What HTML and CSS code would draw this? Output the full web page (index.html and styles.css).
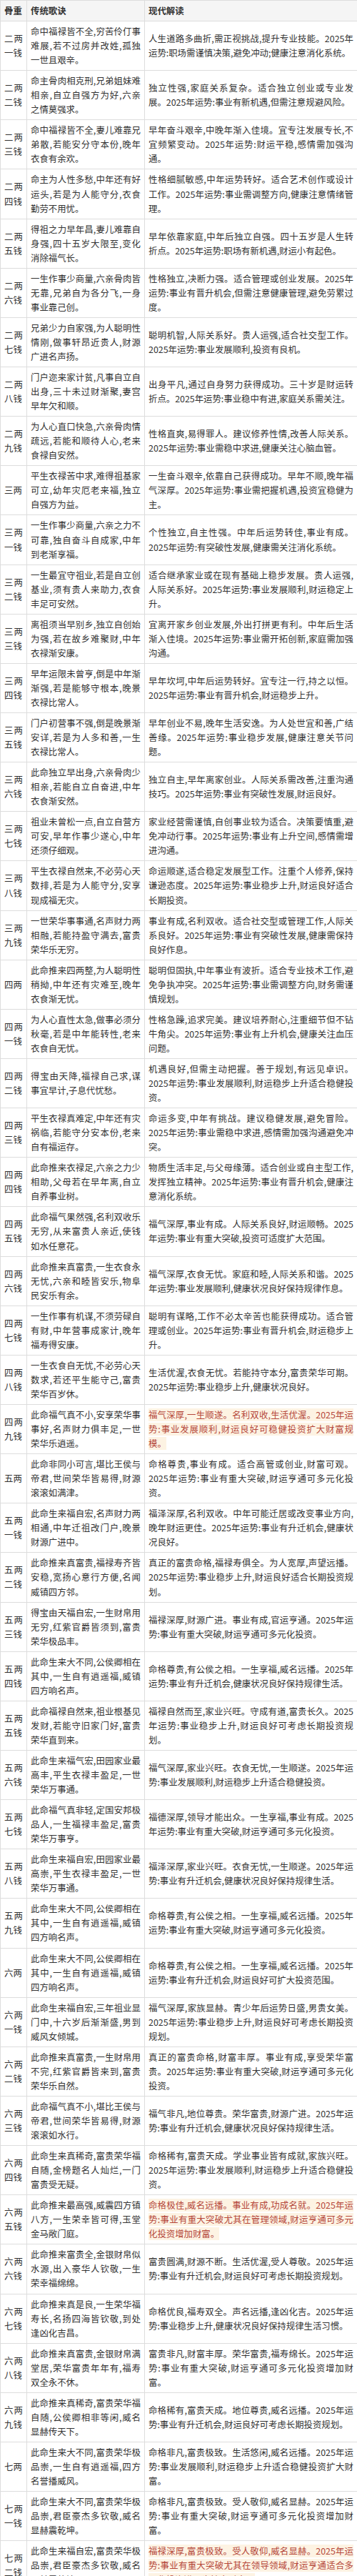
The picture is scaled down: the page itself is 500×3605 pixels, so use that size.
FILE: index.html
```html
<!DOCTYPE html>
<html lang="zh-CN">
<head>
<meta charset="utf-8">
<title>骨重歌诀</title>
<link rel="stylesheet" href="styles.css">
</head>
<body>
<table class="bone-table">
<colgroup><col class="c-weight"><col class="c-verse"><col class="c-modern"></colgroup>
<thead>
<tr><th>骨重</th><th>传统歌诀</th><th>现代解读</th></tr>
</thead>
<tbody>
<tr><td>二两一钱</td><td>命中福禄皆不全,穷苦伶仃事难展,若不过房并改姓,孤独一世且艰辛。</td><td>人生道路多曲折,需正视挑战,提升专业技能。2025年运势:职场需谨慎决策,避免冲动;健康注意消化系统。</td></tr>
<tr><td>二两二钱</td><td>命主骨肉相克刑,兄弟姐妹难相亲,自立自强方为好,六亲之情莫强求。</td><td>独立性强,家庭关系复杂。适合独立创业或专业发展。2025年运势:事业有新机遇,但需注意规避风险。</td></tr>
<tr><td>二两三钱</td><td>命中福禄皆不全,妻儿难靠兄弟散,若能安分守本份,晚年衣食有余欢。</td><td>早年奋斗艰辛,中晚年渐入佳境。宜专注发展专长,不宜频繁变动。2025年运势:财运平稳,感情需加强沟通。</td></tr>
<tr><td>二两四钱</td><td>命主为人性多愁,中年还有好运头,若是为人能守分,衣食勤劳不用忧。</td><td>性格细腻敏感,中年运势转好。适合艺术创作或设计工作。2025年运势:事业需调整方向,健康注意情绪管理。</td></tr>
<tr><td>二两五钱</td><td>得祖之力早年昌,妻儿难靠自身强,四十五岁大限至,变化消除福气长。</td><td>早年依靠家庭,中年后独立自强。四十五岁是人生转折点。2025年运势:职场有新机遇,财运小有起色。</td></tr>
<tr><td>二两六钱</td><td>一生作事少商量,六亲骨肉皆无靠,兄弟自为各分飞,一身事业靠己创。</td><td>性格独立,决断力强。适合管理或创业发展。2025年运势:事业有晋升机会,但需注意健康管理,避免劳累过度。</td></tr>
<tr><td>二两七钱</td><td>兄弟少力自家强,为人聪明性情刚,做事轩昂近贵人,财源广进名声扬。</td><td>聪明机智,人际关系好。贵人运强,适合社交型工作。2025年运势:事业发展顺利,投资有良机。</td></tr>
<tr><td>二两八钱</td><td>门户迩来家计贫,凡事自立自出身,三十未过财渐聚,妻宫早年欠和顺。</td><td>出身平凡,通过自身努力获得成功。三十岁是财运转折点。2025年运势:事业稳中有进,家庭关系需关注。</td></tr>
<tr><td>二两九钱</td><td>为人心直口快急,六亲骨肉情疏远,若能和顺待人心,老来食禄自安然。</td><td>性格直爽,易得罪人。建议修养性情,改善人际关系。2025年运势:事业需稳中求进,健康关注心脑血管。</td></tr>
<tr><td>三两</td><td>平生衣禄苦中求,难得祖基家可立,幼年灾厄老来福,独立自强方为益。</td><td>一生奋斗艰辛,依靠自己获得成功。早年不顺,晚年福气深厚。2025年运势:事业需把握机遇,投资宜稳健为主。</td></tr>
<tr><td>三两一钱</td><td>一生作事少商量,六亲之力不可靠,独自奋斗自成家,中年到老渐享福。</td><td>个性独立,自主性强。中年后运势转佳,事业有成。2025年运势:有突破性发展,健康需关注消化系统。</td></tr>
<tr><td>三两二钱</td><td>一生最宜守祖业,若是自立创基业,须有贵人来助力,衣食丰足可安然。</td><td>适合继承家业或在现有基础上稳步发展。贵人运强,人际关系好。2025年运势:事业发展顺利,财运稳定上升。</td></tr>
<tr><td>三两三钱</td><td>离祖须当早别乡,独立自创始为强,若在故乡难聚财,中年衣禄渐安康。</td><td>宜离开家乡创业发展,外出打拼更有利。中年后生活渐入佳境。2025年运势:事业需开拓创新,家庭需加强沟通。</td></tr>
<tr><td>三两四钱</td><td>早年运限未曾亨,倒是中年渐渐强,若是能够守根本,晚景衣禄比常人。</td><td>早年坎坷,中年后运势转好。宜专注一行,持之以恒。2025年运势:事业有晋升机会,财运稳步上升。</td></tr>
<tr><td>三两五钱</td><td>门户初营事不强,倒是晚景渐安详,若是为人多和善,一生衣禄比常人。</td><td>早年创业不易,晚年生活安逸。为人处世宜和善,广结善缘。2025年运势:事业稳步发展,健康注意关节问题。</td></tr>
<tr><td>三两六钱</td><td>此命独立早出身,六亲骨肉少相亲,若能自立自奋进,中年衣食渐安然。</td><td>独立自主,早年离家创业。人际关系需改善,注重沟通技巧。2025年运势:事业有突破性发展,财运良好。</td></tr>
<tr><td>三两七钱</td><td>祖业未曾松一点,自立自营方可安,早年作事少遂心,中年还须仔细观。</td><td>家业经营需谨慎,自创事业较为适合。决策要慎重,避免冲动行事。2025年运势:事业有上升空间,感情需增进沟通。</td></tr>
<tr><td>三两八钱</td><td>平生衣禄自然来,不必劳心天数排,若是为人能守分,安享现成福无灾。</td><td>命运顺遂,适合稳定发展型工作。注重个人修养,保持谦逊态度。2025年运势:事业稳步上升,财运良好适合长期投资。</td></tr>
<tr><td>三两九钱</td><td>一世荣华事事通,名声财力两相融,若能持盈守满去,富贵荣华乐无穷。</td><td>事业有成,名利双收。适合社交型或管理工作,人际关系良好。2025年运势:事业有突破性发展,健康需保持良好作息。</td></tr>
<tr><td>四两</td><td>此命推来四两整,为人聪明性稍拗,中年还有灾难至,晚年衣食渐无忧。</td><td>聪明但固执,中年事业有波折。适合专业技术工作,避免争执冲突。2025年运势:事业需调整方向,财务需谨慎规划。</td></tr>
<tr><td>四两一钱</td><td>为人心直性太急,做事必须分秋毫,若是中年能转性,老来衣食自无忧。</td><td>性格急躁,追求完美。建议培养耐心,注重细节但不钻牛角尖。2025年运势:事业有上升机会,健康关注血压问题。</td></tr>
<tr><td>四两二钱</td><td>得宝由天降,福禄自己求,谋事宜早计,子息代忧愁。</td><td>机遇良好,但需主动把握。善于规划,有远见卓识。2025年运势:事业发展顺利,财运稳步上升适合稳健投资。</td></tr>
<tr><td>四两三钱</td><td>平生衣禄真难定,中年还有灾祸临,若能守分安本份,老来自有福运存。</td><td>命运多变,中年有挑战。建议稳健发展,避免冒险。2025年运势:事业需稳中求进,感情需加强沟通避免冲突。</td></tr>
<tr><td>四两四钱</td><td>此命推来衣禄足,六亲之力少相助,父母若在早年离,自立自养事业树。</td><td>物质生活丰足,与父母缘薄。适合创业或自主型工作,发挥独立精神。2025年运势:事业有晋升机会,健康注意消化系统。</td></tr>
<tr><td>四两五钱</td><td>此命福气果然强,名利双收乐无穷,从来富贵人亲近,使钱如水任意花。</td><td>福气深厚,事业有成。人际关系良好,财运顺畅。2025年运势:事业有重大突破,投资可适度扩大范围。</td></tr>
<tr><td>四两六钱</td><td>此命推来真富贵,一生衣食永无忧,六亲和睦皆安乐,物阜民安乐有余。</td><td>福气深厚,衣食无忧。家庭和睦,人际关系和谐。2025年运势:事业发展顺利,健康状况良好保持规律作息。</td></tr>
<tr><td>四两七钱</td><td>一生作事有机谋,不须劳碌自有财,中年营事成家计,晚年福寿得安康。</td><td>聪明有谋略,工作不必太辛苦也能获得成功。适合管理或创业。2025年运势:事业有晋升机会,财运稳步上升。</td></tr>
<tr><td>四两八钱</td><td>一生衣食自无忧,不必劳心天数求,若还平生能守己,富贵荣华百岁休。</td><td>生活优渥,衣食无忧。若能持守本分,富贵荣华可期。2025年运势:事业稳步上升,健康状况良好。</td></tr>
<tr><td>四两九钱</td><td>此命福气真不小,安享荣华事事好,名声财力俱丰足,一世荣华乐逍遥。</td><td><span class="hl">福气深厚,一生顺遂。名利双收,生活优渥。2025年运势:事业发展顺利,财运良好可稳健投资扩大财富规模。</span></td></tr>
<tr><td>五两</td><td>此命非同小可言,堪比王侯与帝君,世间荣华皆易得,财源滚滚如满津。</td><td>命格尊贵,事业有成。适合高管或创业,财富可观。2025年运势:事业有重大突破,财运亨通可多元化投资。</td></tr>
<tr><td>五两一钱</td><td>此命生来福自宏,名声财力两相通,中年迁祖改门户,晚景财源广进中。</td><td>福泽深厚,名利双收。中年可能迁居或改变事业方向,晚年财运更佳。2025年运势:事业有升迁机会,健康状况良好。</td></tr>
<tr><td>五两二钱</td><td>此命推来真富贵,福禄寿齐皆安稳,宽扬心意行方便,名闻威镇四方邻。</td><td>真正的富贵命格,福禄寿俱全。为人宽厚,声望远播。2025年运势:事业稳步上升,财运良好适合长期投资规划。</td></tr>
<tr><td>五两三钱</td><td>得宝由天福自宏,一生财帛用无穷,红紫官爵皆须到,富贵荣华极品丰。</td><td>福禄深厚,财源广进。事业有成,官运亨通。2025年运势:事业有重大突破,财运亨通可多元化投资。</td></tr>
<tr><td>五两四钱</td><td>此命生来大不同,公侯卿相在其中,一生自有逍遥福,威镇四方响名声。</td><td>命格尊贵,有公侯之相。一生享福,威名远播。2025年运势:事业有升迁机会,健康状况良好保持规律生活。</td></tr>
<tr><td>五两五钱</td><td>此命福禄自然来,祖业根基见发财,若能守旧家门好,富贵荣华直到来。</td><td>福禄自然而至,家业兴旺。守成有道,富贵长久。2025年运势:事业稳步上升,财运良好可考虑长期投资规划。</td></tr>
<tr><td>五两六钱</td><td>此命生来福气宏,田园家业最高丰,平生衣禄丰盈足,一世荣华万事通。</td><td>福气深厚,家业兴旺。衣食无忧,一生顺遂。2025年运势:事业发展顺利,财运稳步上升适合稳健投资。</td></tr>
<tr><td>五两七钱</td><td>此命福气真非轻,定国安邦极品人,一生福禄丰盈足,富贵荣华万事亨。</td><td>福德深厚,领导才能出众。一生享福,事业有成。2025年运势:事业有重大突破,财运亨通可多元化投资。</td></tr>
<tr><td>五两八钱</td><td>此命生来福自宏,田园家业最高崇,平生衣禄丰盈足,一世荣华万事通。</td><td>福泽深厚,家业兴旺。衣食无忧,一生顺遂。2025年运势:事业有升迁机会,健康状况良好保持规律生活。</td></tr>
<tr><td>五两九钱</td><td>此命生来大不同,公侯卿相在其中,一生自有逍遥福,威镇四方响名声。</td><td>命格尊贵,有公侯之相。一生享福,威名远播。2025年运势:事业有重大突破,财运亨通可多元化投资。</td></tr>
<tr><td>六两</td><td>此命生来大不同,公侯卿相在其中,一生自有逍遥福,威镇四方响名声。</td><td>命格尊贵,有公侯之相。一生享福,威名远播。2025年运势:事业有升迁机会,财运良好可扩大投资范围。</td></tr>
<tr><td>六两一钱</td><td>此命生来福自宏,三年祖业显门中,十六岁后渐渐盛,男到威风女倾城。</td><td>福气深厚,家族显赫。青少年后运势日盛,男贵女美。2025年运势:事业稳步上升,财运良好可考虑长期投资规划。</td></tr>
<tr><td>六两二钱</td><td>此命推来真富贵,一生财帛用不完,红紫官爵皆来到,富贵荣华乐自然。</td><td>真正的富贵命格,财富丰厚。事业有成,享受荣华富贵。2025年运势:事业有重大突破,财运亨通可多元化投资。</td></tr>
<tr><td>六两三钱</td><td>此命福气真不小,堪比王侯与帝君,世间荣华皆易得,财源滚滚如水行。</td><td>福气非凡,地位尊贵。荣华富贵,财源广进。2025年运势:事业有升迁机会,健康状况良好保持规律生活。</td></tr>
<tr><td>六两四钱</td><td>此命生来真稀奇,富贵荣华福自随,金榜题名人灿烂,一门富贵受无疑。</td><td>命格稀有,富贵天成。学业事业皆有成就,家族兴旺。2025年运势:事业发展顺利,财运稳步上升适合稳健投资。</td></tr>
<tr><td>六两五钱</td><td>此命推来最高强,威震四方镇八方,一生荣幸皆可得,玉堂金马敞门庭。</td><td><span class="hl">命格极佳,威名远播。事业有成,功成名就。2025年运势:事业有重大突破尤其在管理领域,财运亨通可多元化投资增加财富。</span></td></tr>
<tr><td>六两六钱</td><td>此命推来富贵全,金银财帛似水源,出入豪华人钦敬,一生荣幸福绵绵。</td><td>富贵圆满,财源不断。生活优渥,受人尊敬。2025年运势:事业有升迁机会,财运良好可考虑长期投资规划。</td></tr>
<tr><td>六两七钱</td><td>此命推来真是良,一生荣华福寿长,名扬四海皆钦敬,到处逢凶化吉昌。</td><td>命格优良,福寿双全。声名远播,逢凶化吉。2025年运势:事业稳步上升,健康状况良好保持规律生活习惯。</td></tr>
<tr><td>六两八钱</td><td>此命推来真富贵,金银财帛满堂居,荣华富贵年年有,福寿双全永不休。</td><td>富贵非凡,财富丰厚。荣华富贵,福寿绵长。2025年运势:事业有重大突破,财运亨通可多元化投资增加财富。</td></tr>
<tr><td>六两九钱</td><td>此命推来真稀奇,富贵荣华福自随,公侯卿相非等闲,威名显赫传天下。</td><td>命格稀有,富贵天成。地位尊贵,威名远播。2025年运势:事业有升迁机会,财运良好可考虑长期投资规划。</td></tr>
<tr><td>七两</td><td>此命生来大不同,富贵荣华极品崇,一生自有逍遥福,四方名誉播威风。</td><td>命格非凡,富贵极致。生活悠闲,威名远播。2025年运势:事业发展顺利,财运稳步上升适合稳健投资扩大财富。</td></tr>
<tr><td>七两一钱</td><td>此命生来大不同,富贵荣华极品崇,君臣豪杰多钦敬,威名显赫震乾坤。</td><td>命格非凡,富贵极致。受人敬仰,威名显赫。2025年运势:事业有重大突破,财运亨通可多元化投资增加财富。</td></tr>
<tr><td>七两二钱</td><td>此命生来福自宏,富贵荣华极品崇,君臣豪杰多钦敬,威名显赫震乾坤。</td><td><span class="hl">福禄深厚,富贵极致。受人敬仰,威名显赫。2025年运势:事业有重大突破尤其在领导领域,财运亨通适合多元化投资进一步扩大财富。</span></td></tr>
</tbody>
</table>
</body>
</html>
```

FILE: styles.css
```css
html, body {
  margin: 0;
  padding: 0;
  background: #ffffff;
}

.bone-table {
  width: 500px;
  border-collapse: collapse;
  table-layout: fixed;
  font-family: "Noto Sans CJK SC", "Noto Sans", sans-serif;
  font-size: 12.4px;
  line-height: 20.05px;
  color: #333333;
}

.c-weight { width: 37px; }
.c-verse { width: 165px; }
.c-modern { width: 298px; }

.bone-table th,
.bone-table td {
  border: 1px solid #dddddd;
  padding: 4px 5px;
  text-align: justify;
  vertical-align: middle;
}

.bone-table th {
  background: #f5f5f5;
  font-weight: bold;
  text-align: left;
}

.hl {
  color: #b5473a;
  background: #fdf3e3;
}
```
